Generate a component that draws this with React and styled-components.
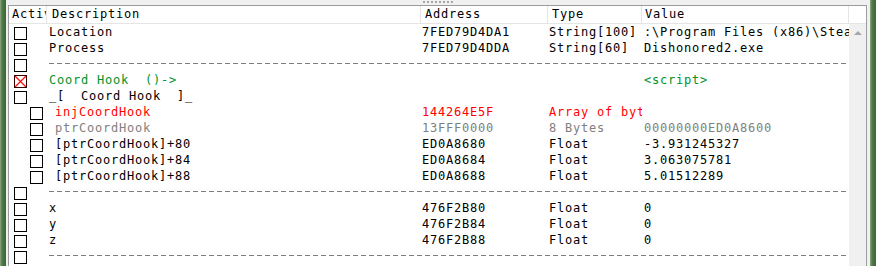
import React from 'react';
import styled, { createGlobalStyle } from 'styled-components';

const GlobalStyle = createGlobalStyle`
  html, body {
    margin: 0;
    padding: 0;
    overflow: hidden;
    background: #f0f0f0;
  }
`;

// janela inteira: faixa verde | painel | faixa verde
const Window = styled.div`
  display: flex;
  width: 876px;
  height: 266px;
  overflow: hidden;
  font-family: "DejaVu Sans Mono", "Liberation Mono", monospace;
  font-size: 12px;
  letter-spacing: 0.78px;
`;

const Edge = styled.div`
  width: ${(p) => p.$width}px;
  flex: none;
  background: linear-gradient(90deg, #8da585 0%, #4f7b47 35%, #3d6636 100%);
`;

const Panel = styled.div`
  flex: 1;
  display: flex;
  flex-direction: column;
  background: #f0f0f0;
  padding: 0 3px 0 2px;
`;

const Splitter = styled.div`
  height: 5px;
  flex: none;
  display: flex;
  justify-content: center;
  padding-top: 1px;
  box-sizing: border-box;
`;

const Grip = styled.div`
  width: 30px;
  height: 2px;
  background: repeating-linear-gradient(90deg, #a8a8a8 0 2px, transparent 2px 4px);
`;

const List = styled.div`
  flex: 1;
  display: flex;
  flex-direction: column;
  border: 1px solid #9c9c9c;
  border-bottom: none;
  background: #fff;
  min-height: 0;
`;

const Header = styled.div`
  display: flex;
  height: 17px;
  flex: none;
  border-bottom: 1px solid #e5e5e5;
  background: #fff;
`;

const HeadCell = styled.div`
  width: ${(p) => p.$w}px;
  flex: none;
  box-sizing: border-box;
  padding-left: ${(p) => p.$pad ?? 4}px;
  border-right: 1px solid #e5e5e5;
  line-height: 17px;
  color: #000;
  overflow: hidden;
  white-space: nowrap;
`;

const Body = styled.div`
  flex: 1;
  display: flex;
  min-height: 0;
`;

const Rows = styled.div`
  flex: 1;
  display: flex;
  flex-direction: column;
`;

const Row = styled.div`
  display: flex;
  height: 16px;
  flex: none;
`;

const CheckCell = styled.div`
  width: 38px;
  flex: none;
  box-sizing: border-box;
  padding-left: ${(p) => 5 + p.$depth * 16}px;
  padding-top: 3px;
`;

const Box = styled.div`
  width: 13px;
  height: 13px;
  box-sizing: border-box;
  border: 1px solid ${(p) => (p.$checked ? '#3a0000' : '#000')};
  background: #fff;
`;

const tones = {
  normal: '#000',
  green: '#00922a',
  red: '#ff0000',
  grey: '#808080',
};

const Cell = styled.div`
  width: ${(p) => p.$w}px;
  flex: none;
  box-sizing: border-box;
  padding-left: ${(p) => p.$pad ?? 1}px;
  line-height: 16px;
  white-space: pre;
  overflow: hidden;
  color: ${(p) => tones[p.$tone || 'normal']};
`;

const Divider = styled.div`
  flex: 1;
  margin-left: 2px;
  align-self: center;
  margin-top: -2px;
  height: 1px;
  background: repeating-linear-gradient(90deg, #7d7d7d 0 5px, transparent 5px 8px);
`;

const ScrollBar = styled.div`
  width: 17px;
  flex: none;
  background: #f0f0f0;
  display: flex;
  justify-content: center;
  padding-top: 7px;
  box-sizing: border-box;
`;

const Arrow = styled.div`
  width: 0;
  height: 0;
  border-left: 4px solid transparent;
  border-right: 4px solid transparent;
  border-bottom: 4px solid #a6a6a6;
`;

const cols = { desc: 374, addr: 127, type: 94, value: 207 };

const rows = [
  { desc: 'Location', addr: '7FED79D4DA1', type: 'String[100]', value: ':\\Program Files (x86)\\Steam\\steamapps\\common' },
  { desc: 'Process', addr: '7FED79D4DDA', type: 'String[60]', value: 'Dishonored2.exe' },
  { divider: true },
  { desc: 'Coord Hook  ()->', value: '<script>', tone: 'green', checked: true },
  { desc: '_[  Coord Hook  ]_' },
  { depth: 1, desc: 'injCoordHook', addr: '144264E5F', type: 'Array of byte', tone: 'red' },
  { depth: 1, desc: 'ptrCoordHook', addr: '13FFF0000', type: '8 Bytes', value: '00000000ED0A8600', tone: 'grey' },
  { depth: 1, desc: '[ptrCoordHook]+80', addr: 'ED0A8680', type: 'Float', value: '-3.931245327' },
  { depth: 1, desc: '[ptrCoordHook]+84', addr: 'ED0A8684', type: 'Float', value: '3.063075781' },
  { depth: 1, desc: '[ptrCoordHook]+88', addr: 'ED0A8688', type: 'Float', value: '5.01512289' },
  { divider: true },
  { desc: 'x', addr: '476F2B80', type: 'Float', value: '0' },
  { desc: 'y', addr: '476F2B84', type: 'Float', value: '0' },
  { desc: 'z', addr: '476F2B88', type: 'Float', value: '0' },
  { divider: true },
  { desc: '' },
];

function CheckBox({ checked }) {
  return (
    <Box $checked={checked}>
      {checked && (
        <svg width="11" height="11" viewBox="0 0 11 11" style={{ display: 'block' }}>
          <path d="M0 0 L11 11 M11 0 L0 11" stroke="#ff1010" strokeWidth="1.3" />
        </svg>
      )}
    </Box>
  );
}

function EntryRow({ entry }) {
  const depth = entry.depth || 0;
  return (
    <Row>
      <CheckCell $depth={depth}>
        <CheckBox checked={entry.checked} />
      </CheckCell>
      {entry.divider ? (
        <Divider />
      ) : (
        <>
          <Cell $w={cols.desc} $pad={2 + depth * 6} $tone={entry.tone}>{entry.desc}</Cell>
          <Cell $w={cols.addr} $tone={entry.tone}>{entry.addr}</Cell>
          <Cell $w={cols.type} $tone={entry.tone}>{entry.type}</Cell>
          <Cell $w={cols.value} $pad={2} $tone={entry.tone}>{entry.value}</Cell>
        </>
      )}
    </Row>
  );
}

export default function App() {
  return (
    <>
      <GlobalStyle />
      <Window>
        <Edge $width={6} />
        <Panel>
          <Splitter>
            <Grip />
          </Splitter>
          <List>
            <Header>
              <HeadCell $w={38} $pad={3}>Active</HeadCell>
              <HeadCell $w={cols.desc} $pad={5}>Description</HeadCell>
              <HeadCell $w={cols.addr}>Address</HeadCell>
              <HeadCell $w={cols.type}>Type</HeadCell>
              <HeadCell $w={cols.value} $pad={3}>Value</HeadCell>
            </Header>
            <Body>
              <Rows>
                {rows.map((entry, i) => (
                  <EntryRow key={i} entry={entry} />
                ))}
              </Rows>
              <ScrollBar>
                <Arrow />
              </ScrollBar>
            </Body>
          </List>
        </Panel>
        <Edge $width={6} />
      </Window>
    </>
  );
}
